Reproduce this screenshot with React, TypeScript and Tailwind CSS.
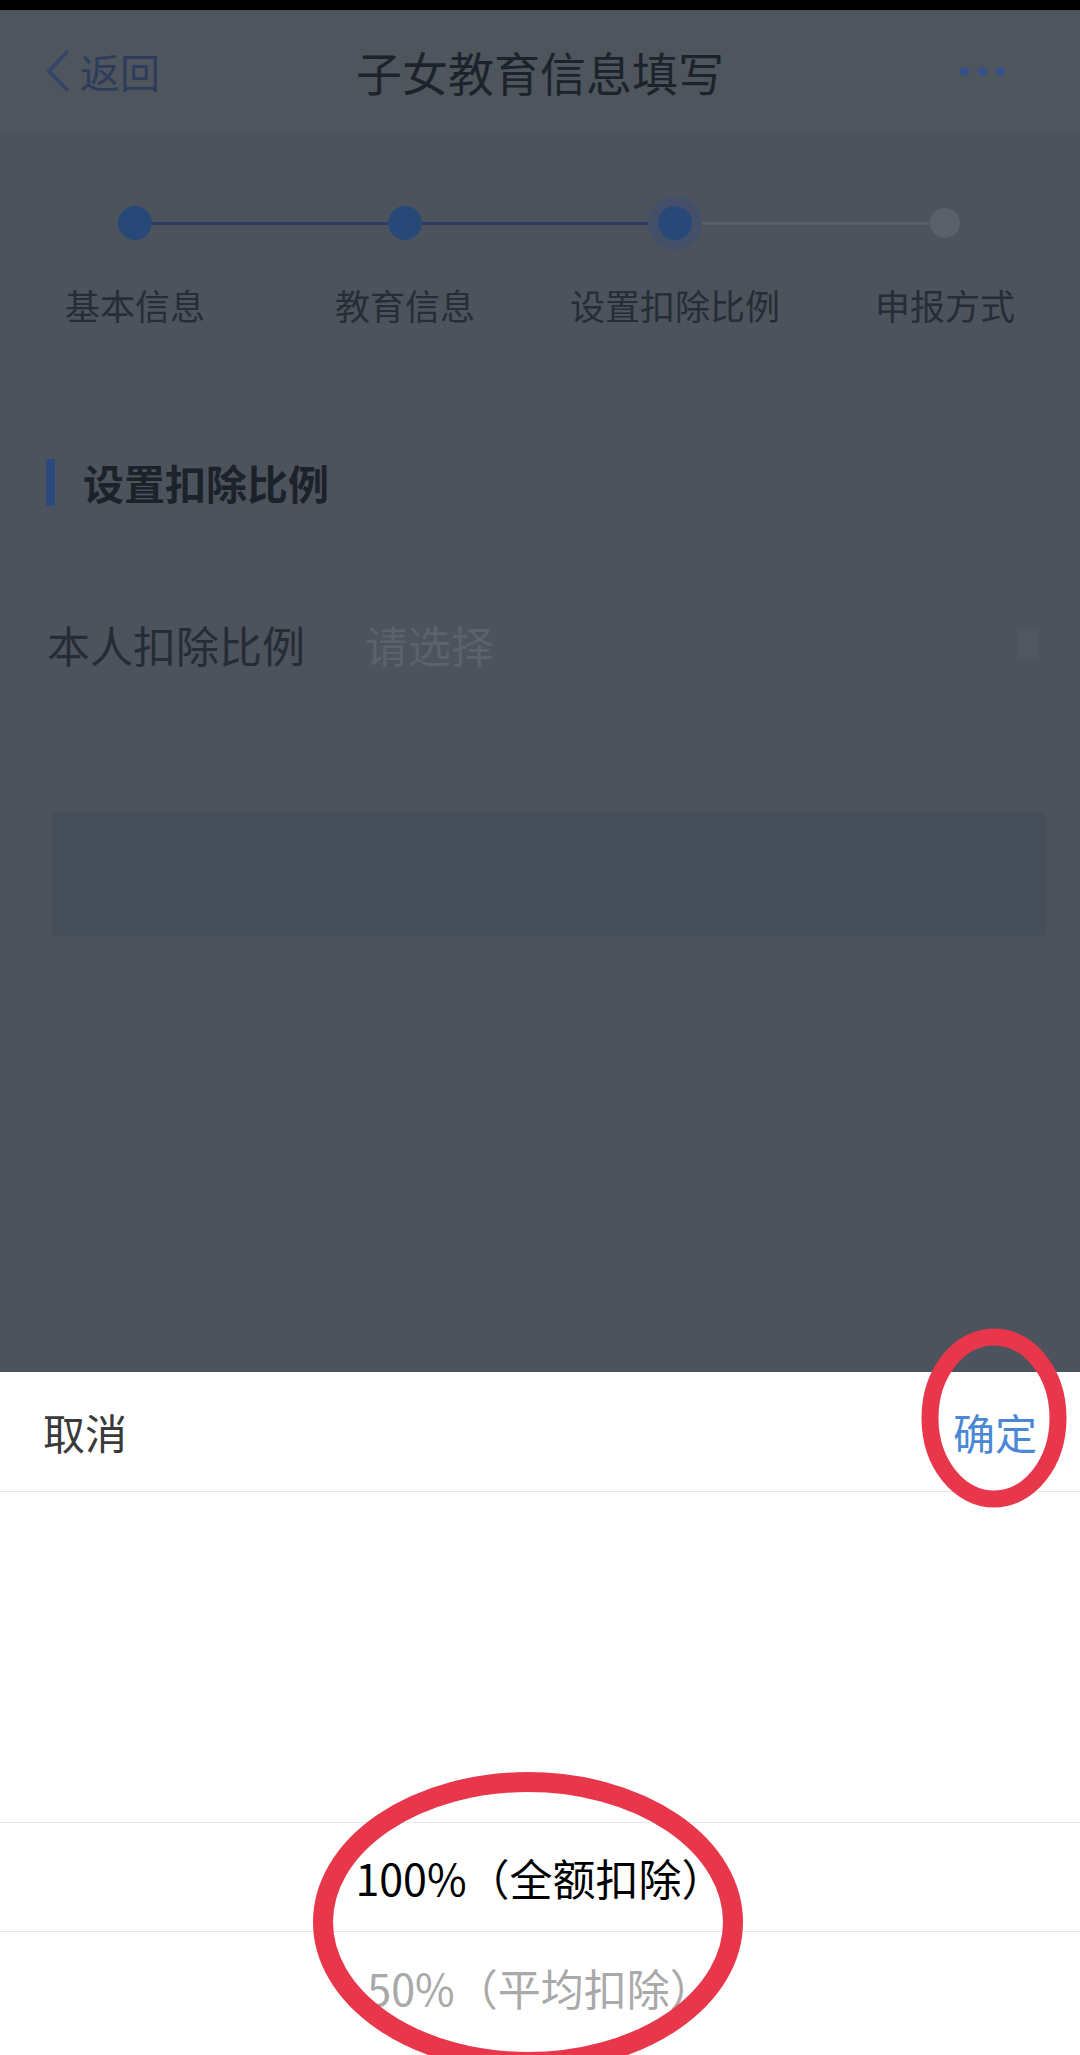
const STEPS = [
  { label: '基本信息', done: true, current: false },
  { label: '教育信息', done: true, current: false },
  { label: '设置扣除比例', done: true, current: true },
  { label: '申报方式', done: false, current: false },
];

const OPTIONS = ['100%（全额扣除）', '50%（平均扣除）'];

function StepBar() {
  return (
    <div className="grid grid-cols-4 pt-[63px]">
      {STEPS.map((step, i) => {
        const prev = STEPS[i - 1];
        const next = STEPS[i + 1];
        return (
          <div key={step.label} className="flex flex-col items-center">
            {/* dot row with half lines on each side */}
            <div className="flex h-[56px] w-full items-center">
              <div
                className={`h-[3px] flex-1 ${
                  !prev ? 'bg-transparent' : step.done ? 'bg-[#2c3a64]' : 'bg-[#585e66]'
                }`}
              />
              {step.current ? (
                <div className="relative h-[34px] w-[34px]">
                  <div className="absolute -inset-[10px] rounded-full bg-[#44506a]" />
                  <div className="absolute inset-0 rounded-full bg-[#284878]" />
                </div>
              ) : step.done ? (
                <div className="h-[34px] w-[34px] rounded-full bg-[#284878]" />
              ) : (
                <div className="h-[30px] w-[30px] rounded-full bg-[#5b6169]" />
              )}
              <div
                className={`h-[3px] flex-1 ${
                  !next ? 'bg-transparent' : next.done ? 'bg-[#2c3a64]' : 'bg-[#585e66]'
                }`}
              />
            </div>
            <div className="mt-[34px] text-[35px] leading-[40px] text-[#262d36]">{step.label}</div>
          </div>
        );
      })}
    </div>
  );
}

export default function App() {
  return (
    <div
      className="relative flex h-[2055px] w-[1080px] flex-col overflow-hidden bg-[#4c535c]"
      style={{ fontFamily: '"Noto Sans CJK SC", "Noto Sans", sans-serif' }}
    >
      {/* status bar */}
      <div className="h-[10px] bg-black" />

      {/* dimmed page behind the sheet */}
      <div className="flex-1">
        {/* nav bar */}
        <div className="flex h-[122px] items-center bg-[#4e555d] px-[44px]">
          <div className="flex w-[216px] items-center">
            <svg width="28" height="44" viewBox="0 0 28 44" fill="none" className="mr-[8px]">
              <path d="M24 2 L5 22 L24 42" stroke="#34446a" strokeWidth="3.5" strokeLinejoin="miter" />
            </svg>
            <span className="text-[40px] leading-none text-[#2e3c5c]">返回</span>
          </div>
          <div className="flex-1 text-center text-[46px] leading-none text-[#1d232b]">子女教育信息填写</div>
          <div className="flex w-[216px] justify-end gap-[9px] pr-[31px]">
            <span className="h-[9px] w-[9px] rounded-full bg-[#35508a]" />
            <span className="h-[9px] w-[9px] rounded-full bg-[#35508a]" />
            <span className="h-[9px] w-[9px] rounded-full bg-[#35508a]" />
          </div>
        </div>

        <StepBar />

        {/* section heading */}
        <div className="mt-[133px] flex h-[48px] items-center px-[46px]">
          <div className="h-[47px] w-[9px] rounded-[2px] bg-[#2b4a80]" />
          <div className="ml-[28px] text-[41px] font-bold leading-none text-[#1c222a]">设置扣除比例</div>
        </div>

        {/* form row */}
        <div className="mt-[83px] flex h-[110px] items-center px-[47px]">
          <div className="w-[318px] text-[43px] leading-none text-[#262c35]">本人扣除比例</div>
          <div className="flex-1 text-[43px] leading-none text-[#5a626b]">请选择</div>
          <div className="mr-[-6px] h-[30px] w-[22px] rounded-[3px] bg-[#50575f]" />
        </div>

        {/* disabled button */}
        <div className="ml-[52px] mr-[34px] mt-[113px] h-[124px] rounded-[6px] bg-[#464e59]" />
      </div>

      {/* bottom sheet picker */}
      <div className="h-[683px] bg-white">
        <div className="flex h-[120px] items-center justify-between border-b border-[#e6e6e6] px-[43px] text-[42px] leading-none">
          <span className="text-[#3a3a3a]">取消</span>
          <span className="text-[#4a88d6]">确定</span>
        </div>
        <div className="h-[330px]" />
        <div className="flex h-[110px] items-center justify-center border-y border-[#e6e6e6] text-[43px] leading-none text-black">
          {OPTIONS[0]}
        </div>
        <div className="flex h-[110px] items-center justify-center text-[43px] leading-none text-[#a9a9a9]">
          {OPTIONS[1]}
        </div>
      </div>

      {/* red hand-drawn annotation circles */}
      <svg
        className="pointer-events-none absolute inset-0 h-full w-full"
        viewBox="0 0 1080 2055"
        fill="none"
      >
        <ellipse cx="994" cy="1418" rx="64" ry="81" stroke="#e8364b" strokeWidth="17" />
        <ellipse cx="528" cy="1922" rx="205" ry="140" stroke="#e8364b" strokeWidth="20" />
      </svg>
    </div>
  );
}
